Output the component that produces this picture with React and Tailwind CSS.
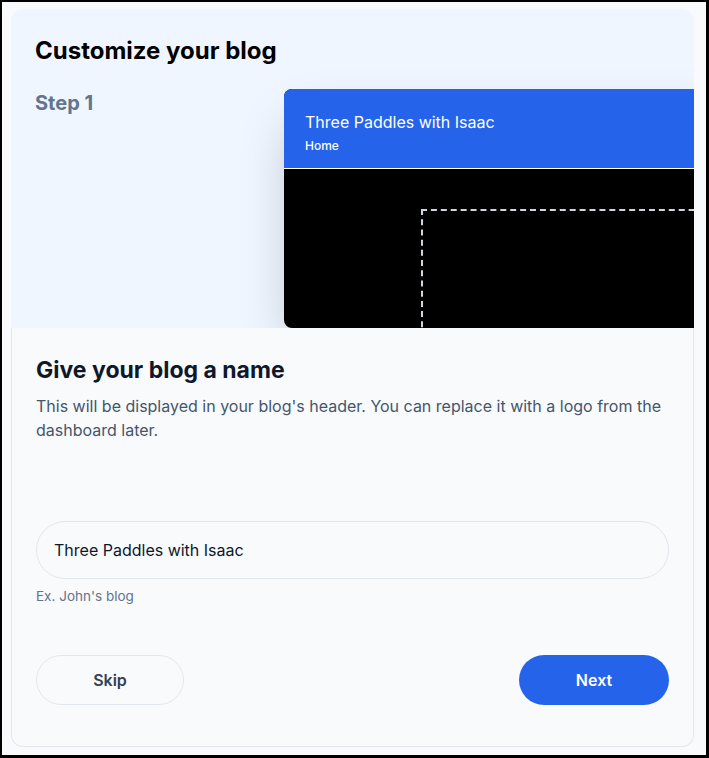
import React from 'react';

const BlogPreview = ({ name }) => (
  <div className="w-[480px] h-[239px] shrink-0 rounded-tl-lg rounded-bl-lg overflow-hidden bg-black shadow-2xl">
    {/* Fake blog header */}
    <div className="h-[80px] bg-[#2563eb] border-b border-white pt-[21px] pl-[21px] flex flex-col gap-1">
      <p className="text-base leading-6 text-white">{name}</p>
      <p className="text-xs leading-4 font-medium text-white">Home</p>
    </div>
    <div className="pt-10 pl-[137px]">
      <div className="h-[200px] border-2 border-dashed border-gray-300 border-r-0"></div>
    </div>
  </div>
);

const App = () => {
  const blogName = 'Three Paddles with Isaac';

  return (
    <div
      className="w-[709px] h-[758px] bg-[#f8fafc] border-black border-l-2 border-t-2 border-r-[3px] border-b-[3px] pl-[9px] pt-[7px]"
      style={{ fontFamily: 'Inter, "Noto Sans", sans-serif' }}
    >
      <div className="w-[683px] flex flex-col">
        {/* Top: title + preview */}
        <div className="bg-[#eff6ff] rounded-t-xl overflow-hidden pt-[26px]">
          <h1 className="px-6 text-2xl leading-8 font-bold text-black">Customize your blog</h1>
          <div className="flex mt-[22px]">
            <div className="w-[273px] shrink-0 pl-6">
              <p className="text-xl leading-7 font-bold text-slate-500">Step 1</p>
            </div>
            <BlogPreview name={blogName} />
          </div>
        </div>

        {/* Bottom: form */}
        <div className="border border-t-0 border-slate-200 rounded-b-xl bg-[#f8fafc] px-6 pt-7 pb-[41px]">
          <h2 className="text-[23px] leading-7 font-bold text-slate-900">Give your blog a name</h2>
          <p className="mt-[10px] text-base leading-6 text-slate-600">
            This will be displayed in your blog's header. You can replace it with a logo from the dashboard later.
          </p>

          <div className="mt-[79px] h-[58px] rounded-full border border-slate-200 bg-[#f8fafc] flex items-center px-[17px]">
            <span className="text-base text-slate-900">{blogName}</span>
          </div>
          <p className="mt-[7px] text-[13.5px] leading-5 text-slate-500">Ex. John's blog</p>

          <div className="mt-[49px] flex justify-between">
            <button className="w-[148px] h-[50px] rounded-full border border-slate-200 text-base font-semibold text-slate-700">
              Skip
            </button>
            <button className="w-[150px] h-[50px] rounded-full bg-[#2563eb] text-base font-semibold text-white">
              Next
            </button>
          </div>
        </div>
      </div>
    </div>
  );
};

export default App;
